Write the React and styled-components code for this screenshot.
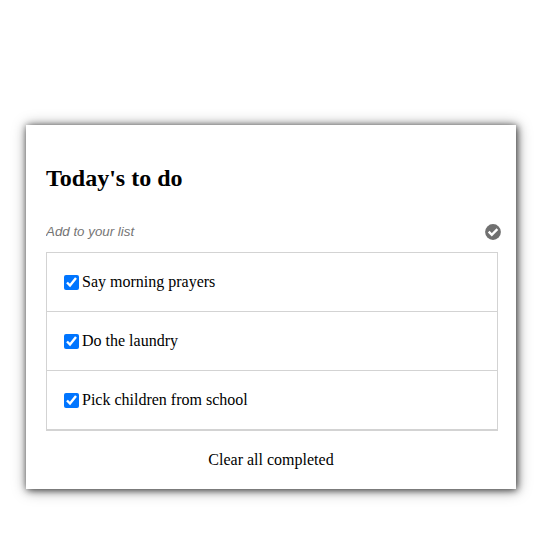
import React, { useState } from "react";
import styled, { createGlobalStyle } from "styled-components";

const GlobalStyle = createGlobalStyle`
  body { margin: 0; background: #fff; color: #000; font: 16px "Liberation Serif", "Times New Roman", serif; }
`;

const Page = styled.main`
  padding: 125px 30px 48px 26px;
`;

const Card = styled.section`
  box-sizing: border-box;
  height: 364px;
  padding: 39px 19px 0 20px;
  background: #fff;
  box-shadow: 1px 1px 7px rgba(0, 0, 0, 0.7), 1px 1px 14px rgba(0, 0, 0, 0.4);
`;

const Title = styled.h1`
  margin: 0;
  font-size: 24px;
  line-height: 28px;
`;

const AddRow = styled.form`
  display: flex;
  align-items: center;
  justify-content: space-between;
  height: 40px;
  margin: 20px -4px 0 0;
`;

const AddInput = styled.input`
  flex: 1;
  padding: 0 0 2px;
  border: 0;
  outline: 0;
  font: italic 13.333px "Liberation Sans", Arial, sans-serif;
  &::placeholder { color: #757575; }
`;

const AddButton = styled.button`
  display: flex;
  padding: 0;
  border: 0;
  background: none;
`;

const CheckIcon = styled.svg`
  width: 16px;
  height: 16px;
  circle { fill: #707070; }
  path { fill: none; stroke: #fff; stroke-width: 2.4; }
`;

const List = styled.ul`
  margin: 0;
  padding: 0;
  list-style: none;
  border: 1px solid #d3d3d3;
  border-bottom-width: 2px;
  width: 450px;
`;

const Item = styled.li`
  display: flex;
  align-items: center;
  height: 58px;
  padding-left: 17px;
  & + & { border-top: 1px solid #d3d3d3; }
`;

const Check = styled.input`
  width: 15px;
  height: 15px;
  margin: 0 3px 0 0;
`;

const ClearButton = styled.button`
  display: block;
  width: 450px;
  height: 58px;
  padding: 0;
  border: 0;
  background: none;
  font: inherit;
  color: #000;
`;

const tasks = ["Say morning prayers", "Do the laundry", "Pick children from school"];

export default function App() {
  const [text, setText] = useState("");
  return (
    <Page>
      <GlobalStyle />
      <Card>
        <Title>Today's to do</Title>
        <AddRow onSubmit={(e) => e.preventDefault()}>
          <AddInput placeholder="Add to your list" value={text} onChange={(e) => setText(e.target.value)} />
          <AddButton>
            <CheckIcon viewBox="0 0 16 16">
              <circle cx="8" cy="8" r="7.9" />
              <path d="M3.7 7.7 L6.8 10.8 L12.4 5.2" />
            </CheckIcon>
          </AddButton>
        </AddRow>
        <List>
          {tasks.map((task) => (
            <Item key={task}><Check type="checkbox" defaultChecked />{task}</Item>
          ))}
        </List>
        <ClearButton>Clear all completed</ClearButton>
      </Card>
    </Page>
  );
}
